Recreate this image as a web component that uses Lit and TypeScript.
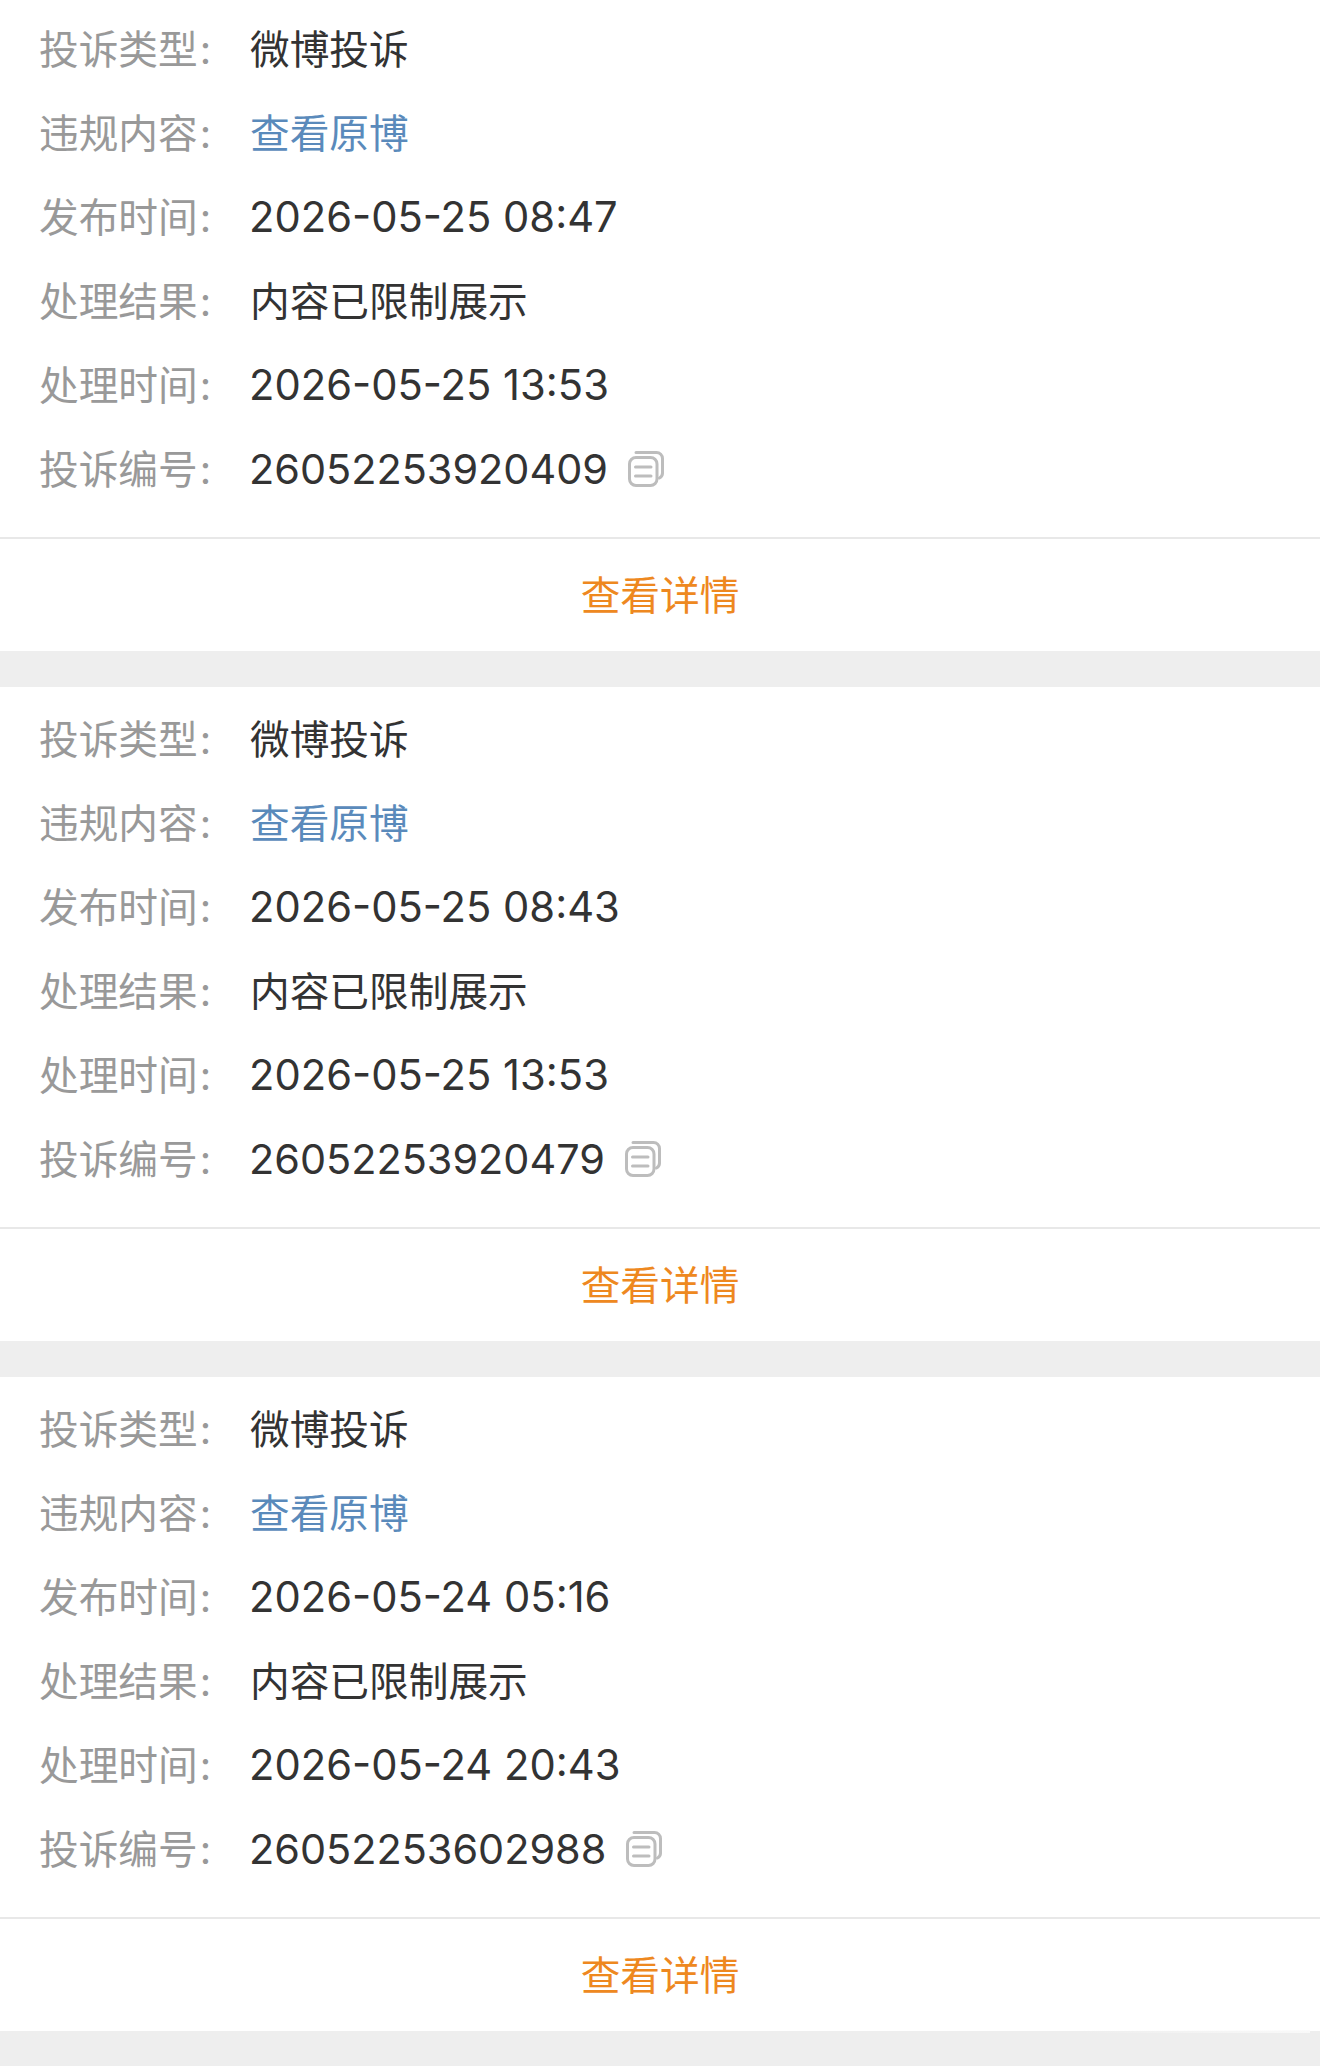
import { LitElement, html, css, svg } from "lit";
import { customElement } from "lit/decorators.js";

const cards = [
  { pub: "2026-05-25 08:47", done: "2026-05-25 13:53", id: "26052253920409" },
  { pub: "2026-05-25 08:43", done: "2026-05-25 13:53", id: "26052253920479" },
  { pub: "2026-05-24 05:16", done: "2026-05-24 20:43", id: "26052253602988" },
];

const copyIcon = svg`<svg class="copy" viewBox="0 0 36 36" width="36" height="36" fill="none" stroke="#bdbdbd" stroke-width="3" stroke-linecap="round" stroke-linejoin="round"><path d="M8 1.5h20.5a6 6 0 0 1 6 6V22a5.5 5.5 0 0 1-3 5"/><rect x="1.5" y="6.5" width="27.5" height="28" rx="6.5"/><path d="M7.5 16h15.5M7.5 25h15.5"/></svg>`;

@customElement("app-root")
export class AppRoot extends LitElement {
  static styles = css`
    :host { display: block; position: relative; width: 1320px; height: 2066px; overflow: hidden; background: #eeeeee;
      font-family: "Inter", "Noto Sans CJK SC", sans-serif; font-size: 39.7px; font-weight: 400; }
    .card { background: #fff; margin-bottom: 36px; }
    .rows { padding: 10px 0 26px; }
    .card:first-child .rows { padding-top: 7px; }
    .row { display: flex; align-items: center; height: 84px; padding-left: 39px; }
    .k { width: 211px; flex: none; color: #999; padding-bottom: 5px; }
    .c { margin-left: 2px; }
    .v { color: #333; }
    .cjk { padding-bottom: 5px; }
    .num { font-size: 41.4px; margin-left: -1px; }
    .date { font-size: 41.7px; }
    .link { color: #5a8abb; }
    .copy { margin-left: 20px; }
    .foot { border-top: 2px solid #e8e8e8; box-sizing: border-box; height: 114px; padding-bottom: 5px; display: flex; align-items: center; justify-content: center; color: #ee8820; }
    .mark { position: absolute; left: 1080px; top: 2030px; width: 230px; height: 3px; background: linear-gradient(90deg, rgba(255,255,255,0), rgba(250,250,250,.9)); }
  `;

  render() {
    return html`${cards.map(c => html`
      <div class="card">
        <div class="rows">
          <div class="row"><span class="k">投诉类型<span class="c">:</span></span><span class="v cjk">微博投诉</span></div>
          <div class="row"><span class="k">违规内容<span class="c">:</span></span><span class="v cjk link">查看原博</span></div>
          <div class="row"><span class="k">发布时间<span class="c">:</span></span><span class="v num date">${c.pub}</span></div>
          <div class="row"><span class="k">处理结果<span class="c">:</span></span><span class="v cjk">内容已限制展示</span></div>
          <div class="row"><span class="k">处理时间<span class="c">:</span></span><span class="v num date">${c.done}</span></div>
          <div class="row"><span class="k">投诉编号<span class="c">:</span></span><span class="v num">${c.id}</span>${copyIcon}</div>
        </div>
        <div class="foot">查看详情</div>
      </div>`)}<div class="mark"></div>`;
  }
}
